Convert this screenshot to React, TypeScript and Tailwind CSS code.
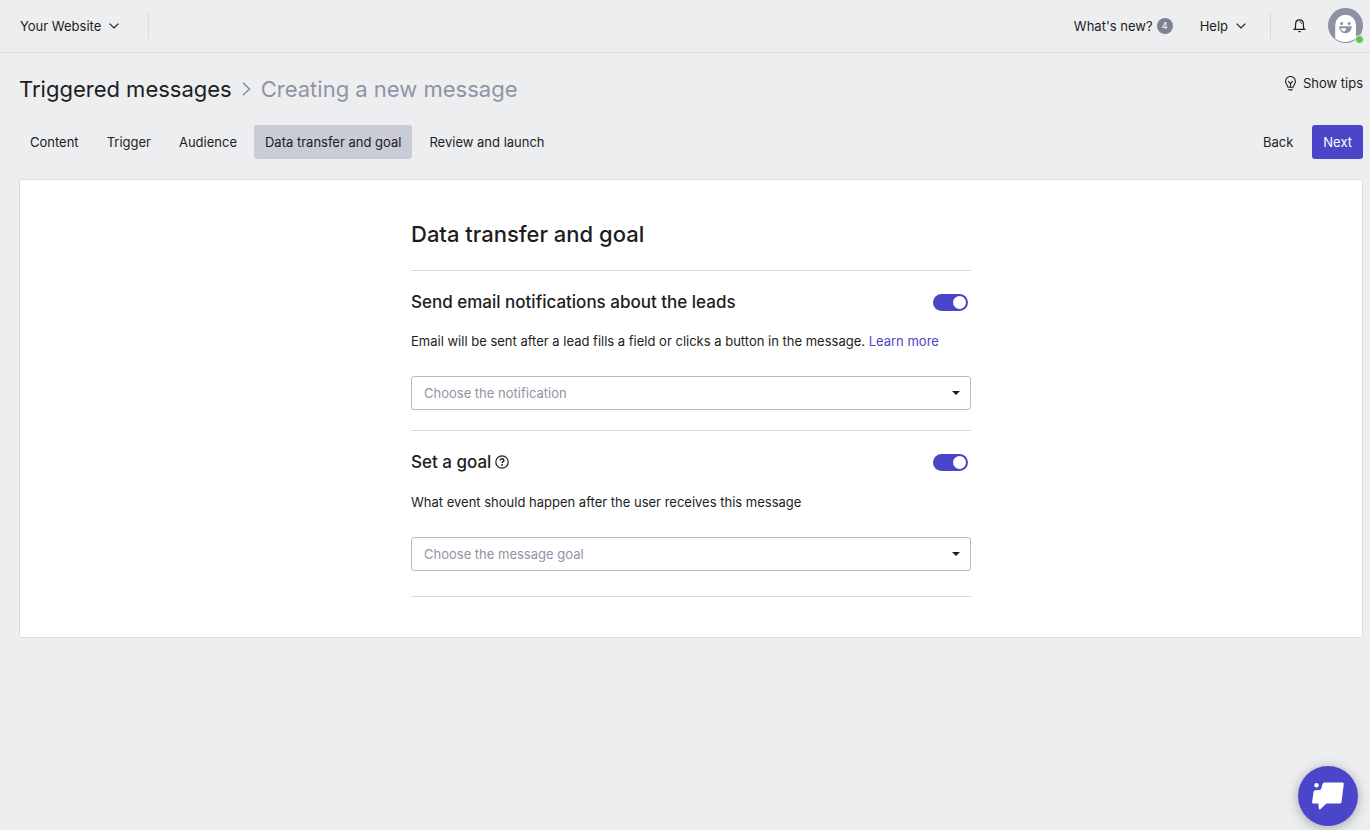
import React, { useState } from 'react';

const steps = ['Content', 'Trigger', 'Audience', 'Data transfer and goal', 'Review and launch'];

const ChevronDown = () => (
  <svg width="10" height="6" viewBox="0 0 10 6" fill="none" stroke="currentColor" strokeWidth="1.2" aria-hidden="true">
    <path d="M0.6 0.6 5 5 9.4 0.6" />
  </svg>
);

interface SwitchProps {
  id: string;
  checked: boolean;
  onChange: (checked: boolean) => void;
}

const Switch: React.FC<SwitchProps> = ({ id, checked, onChange }) => (
  <input
    id={id}
    type="checkbox"
    role="switch"
    checked={checked}
    onChange={(e) => onChange(e.target.checked)}
    className="mr-[3px] h-[17px] w-[35px] shrink-0 cursor-pointer appearance-none rounded-full bg-[#c9ccd6] p-[2px] before:block before:size-[13px] before:rounded-full before:bg-white before:content-[''] checked:bg-[#4b46c9] checked:before:ml-[18px]"
  />
);

interface ChooserProps {
  label: string;
  placeholder: string;
  options: string[];
}

const Chooser: React.FC<ChooserProps> = ({ label, placeholder, options }) => (
  <div className="relative">
    <select
      aria-label={label}
      defaultValue=""
      className="block h-[34px] w-full appearance-none rounded-[3px] border border-[#b9babc] bg-white px-3 text-[13px] text-[#8f94a5]"
    >
      <option value="" disabled>{placeholder}</option>
      {options.map((o) => (
        <option key={o}>{o}</option>
      ))}
    </select>
    <svg className="pointer-events-none absolute top-[15px] right-[11px]" width="8" height="4" viewBox="0 0 8 4" aria-hidden="true">
      <path d="M0 0h8L4 4z" fill="#1c1d21" />
    </svg>
  </div>
);

const TopBar = () => (
  <header className="flex h-[53px] items-center border-b border-[#dadce0] pr-[7px] pl-5">
    <button className="flex items-center gap-2">
      Your Website
      <ChevronDown />
    </button>
    <div className="ml-[29px] h-[26px] w-px bg-[#d9dbe0]" />
    <div className="ml-auto flex items-center pb-px">
      <button className="flex items-center gap-1">
        What's new?
        <span className="flex size-4 items-center justify-center rounded-full bg-[#7d8293] text-[9px] text-white">4</span>
      </button>
      <button className="ml-[27px] flex items-center gap-2">
        Help
        <ChevronDown />
      </button>
      <div className="ml-6 h-[26px] w-px bg-[#d9dbe0]" />
      <button aria-label="Notifications" className="ml-[22px]">
        <svg width="13" height="14" viewBox="0 0 13 14" fill="none" stroke="#1c1d21" strokeWidth="1.2">
          <path d="M0.4 10.4h12.2M2 10.2C2.6 9 2.6 7.8 2.6 5.2 2.6 2.6 4.2 0.9 6.5 0.9s3.9 1.7 3.9 4.3c0 2.6 0 3.8 0.6 5" />
          <path d="M6.6 2.8c1.2 0 2 0.8 2 2" strokeWidth="0.9" />
          <path d="M5.2 12h2.6c0 0.9-0.5 1.4-1.3 1.4S5.2 12.9 5.2 12z" fill="#1c1d21" stroke="none" />
        </svg>
      </button>
      <button aria-label="Account" className="relative ml-[22px]">
        <svg width="35" height="35" viewBox="0 0 35 35">
          <circle cx="17.5" cy="17.5" r="17.5" fill="#8d92a2" />
          <path d="M7.2 30.4V17.2a10.4 10.4 0 0 1 20.8 0V30.1a16.5 16.5 0 0 1-20.8 0.300z" fill="#fff" />
          <circle cx="13.6" cy="15.400" r="1.500" fill="#8d92a2" />
          <circle cx="21.2" cy="15.400" r="1.500" fill="#8d92a2" />
          <path d="M11.2 18.200h12.400c0.200 4.200-2.400 7-6.200 7s-6.400-2.800-6.200-7z" fill="#8d92a2" />
          <path d="M12.600 20.300h5.200c0.500 1.900-0.600 3.200-2.200 3.200-1.400-0.300-2.600-1.600-3-3.200z" fill="#fff" />
        </svg>
        <span className="absolute -right-px -bottom-px size-[9px] rounded-full border border-[#edeef0] bg-[#58c554]" />
      </button>
    </div>
  </header>
);

const App: React.FC = () => {
  const [step, setStep] = useState(3);
  const [notify, setNotify] = useState(true);
  const [goal, setGoal] = useState(true);

  return (
    <div className="min-h-screen bg-[#edeef0] font-['Inter',sans-serif] text-[13px] leading-5 text-[#1c1d21]">
      <TopBar />

      <main className="pt-[22px] pr-[7px] pl-[19px]">
        <div className="flex items-start justify-between">
          <h1 className="flex items-center text-[22px] leading-7">
            <a href="#messages">Triggered messages</a>
            <svg className="mx-[10px] text-[#8f94a5]" width="9" height="14" viewBox="0 0 9 14" fill="none" stroke="currentColor" strokeWidth="1.6" aria-hidden="true">
              <path d="M1 0.8 7.5 7 1 13.2" />
            </svg>
            <span className="text-[#8f94a5]">Creating a new message</span>
          </h1>
          <button className="flex items-center gap-[7px] leading-4">
            <svg width="11" height="15" viewBox="0 0 11 15" fill="none" stroke="currentColor" strokeWidth="1.1" aria-hidden="true">
              <path d="M3 11.2C2.7 9.3 0.6 8 0.6 5.4a4.9 4.9 0 0 1 9.8 0C10.4 8 8.3 9.3 8 11.2z" />
              <path d="M5.5 11V7.4M3.2 5.2 5.5 7.6 7.8 5.2M3.4 13.2c1.2 0.9 3 0.9 4.2 0" />
            </svg>
            Show tips
          </button>
        </div>

        <div className="mt-[22px] flex items-center justify-between">
          <nav className="flex gap-[6px]">
            {steps.map((s, i) => (
              <button
                key={s}
                onClick={() => setStep(i)}
                className={`h-[34px] rounded-[3px] px-[11px] ${i === step ? 'bg-[#c9ccd6]' : ''}`}
              >
                {s}
              </button>
            ))}
          </nav>
          <div className="flex gap-2">
            <button className="h-[34px] px-[11px]" onClick={() => setStep(Math.max(0, step - 1))}>Back</button>
            <button
              className="h-[34px] rounded-[3px] bg-[#4b46c9] px-[11px] text-white"
              onClick={() => setStep(Math.min(steps.length - 1, step + 1))}
            >
              Next
            </button>
          </div>
        </div>

        <section className="mt-5 rounded-[3px] border border-[#dadce0] bg-white py-10">
          <div className="mx-auto max-w-[560px]">
            <h2 className="pb-[22px] text-[22px] leading-7 font-medium">Data transfer and goal</h2>

            {/* Email notifications */}
            <div className="border-t border-[#dadbdd] pt-[18px] pb-5">
              <div className="flex items-center justify-between">
                <label htmlFor="notify" className="text-[17px] leading-[26px] font-medium">Send email notifications about the leads</label>
                <Switch id="notify" checked={notify} onChange={setNotify} />
              </div>
              <p className="mt-4 mb-[25px]">
                Email will be sent after a lead fills a field or clicks a button in the message.{' '}
                <a href="#learn" className="text-[#4b46c9]">Learn more</a>
              </p>
              <Chooser label="Notification" placeholder="Choose the notification" options={['New lead', 'Button click']} />
            </div>

            {/* Goal */}
            <div className="border-y border-[#dadbdd] pt-[18px] pb-[25px]">
              <div className="flex items-center justify-between">
                <label htmlFor="goal" className="flex items-center gap-1 text-[17px] leading-[26px] font-medium">
                  Set a goal
                  <svg width="14" height="14" viewBox="0 0 14 14" fill="none" stroke="currentColor" strokeWidth="1.2" aria-hidden="true">
                    <circle cx="7" cy="7" r="6.2" />
                    <path d="M5.2 5.6c0-1.1 0.8-1.8 1.9-1.8s1.8 0.7 1.8 1.6c0 1.2-1.8 1.3-1.8 2.7" strokeWidth="1.4" />
                    <circle cx="7.1" cy="9.9" r="0.9" fill="currentColor" stroke="none" />
                  </svg>
                </label>
                <Switch id="goal" checked={goal} onChange={setGoal} />
              </div>
              <p className="mt-[17px] mb-[25px]">What event should happen after the user receives this message</p>
              <Chooser label="Message goal" placeholder="Choose the message goal" options={['Page visit', 'Form submitted']} />
            </div>
          </div>
        </section>
      </main>

      <button
        aria-label="Open chat"
        className="fixed right-3 bottom-1 flex size-[60px] items-center justify-center rounded-full bg-[#4b46c9] shadow-[0_2px_12px_rgba(0,0,0,0.3)]"
      >
        <svg width="34" height="30" viewBox="0 0 34 30" fill="#fff">
          <circle cx="5.5" cy="4.2" r="2.2" />
          <path d="M13.5 1.500H31.500Q33 1.500 32.800 3L30.500 21Q30.300 22.500 28.800 22.500H15.500L9.300 28.200Q8 29 7.800 27.500L7.400 22.500H2.300Q0.900 22.500 1.100 21L2.600 10.700Q2.800 9.300 4.200 9.200L8.500 9Q10 8.900 10.300 7.500L11.500 3Q12 1.500 13.500 1.500z" />
        </svg>
      </button>
    </div>
  );
};

export default App;
